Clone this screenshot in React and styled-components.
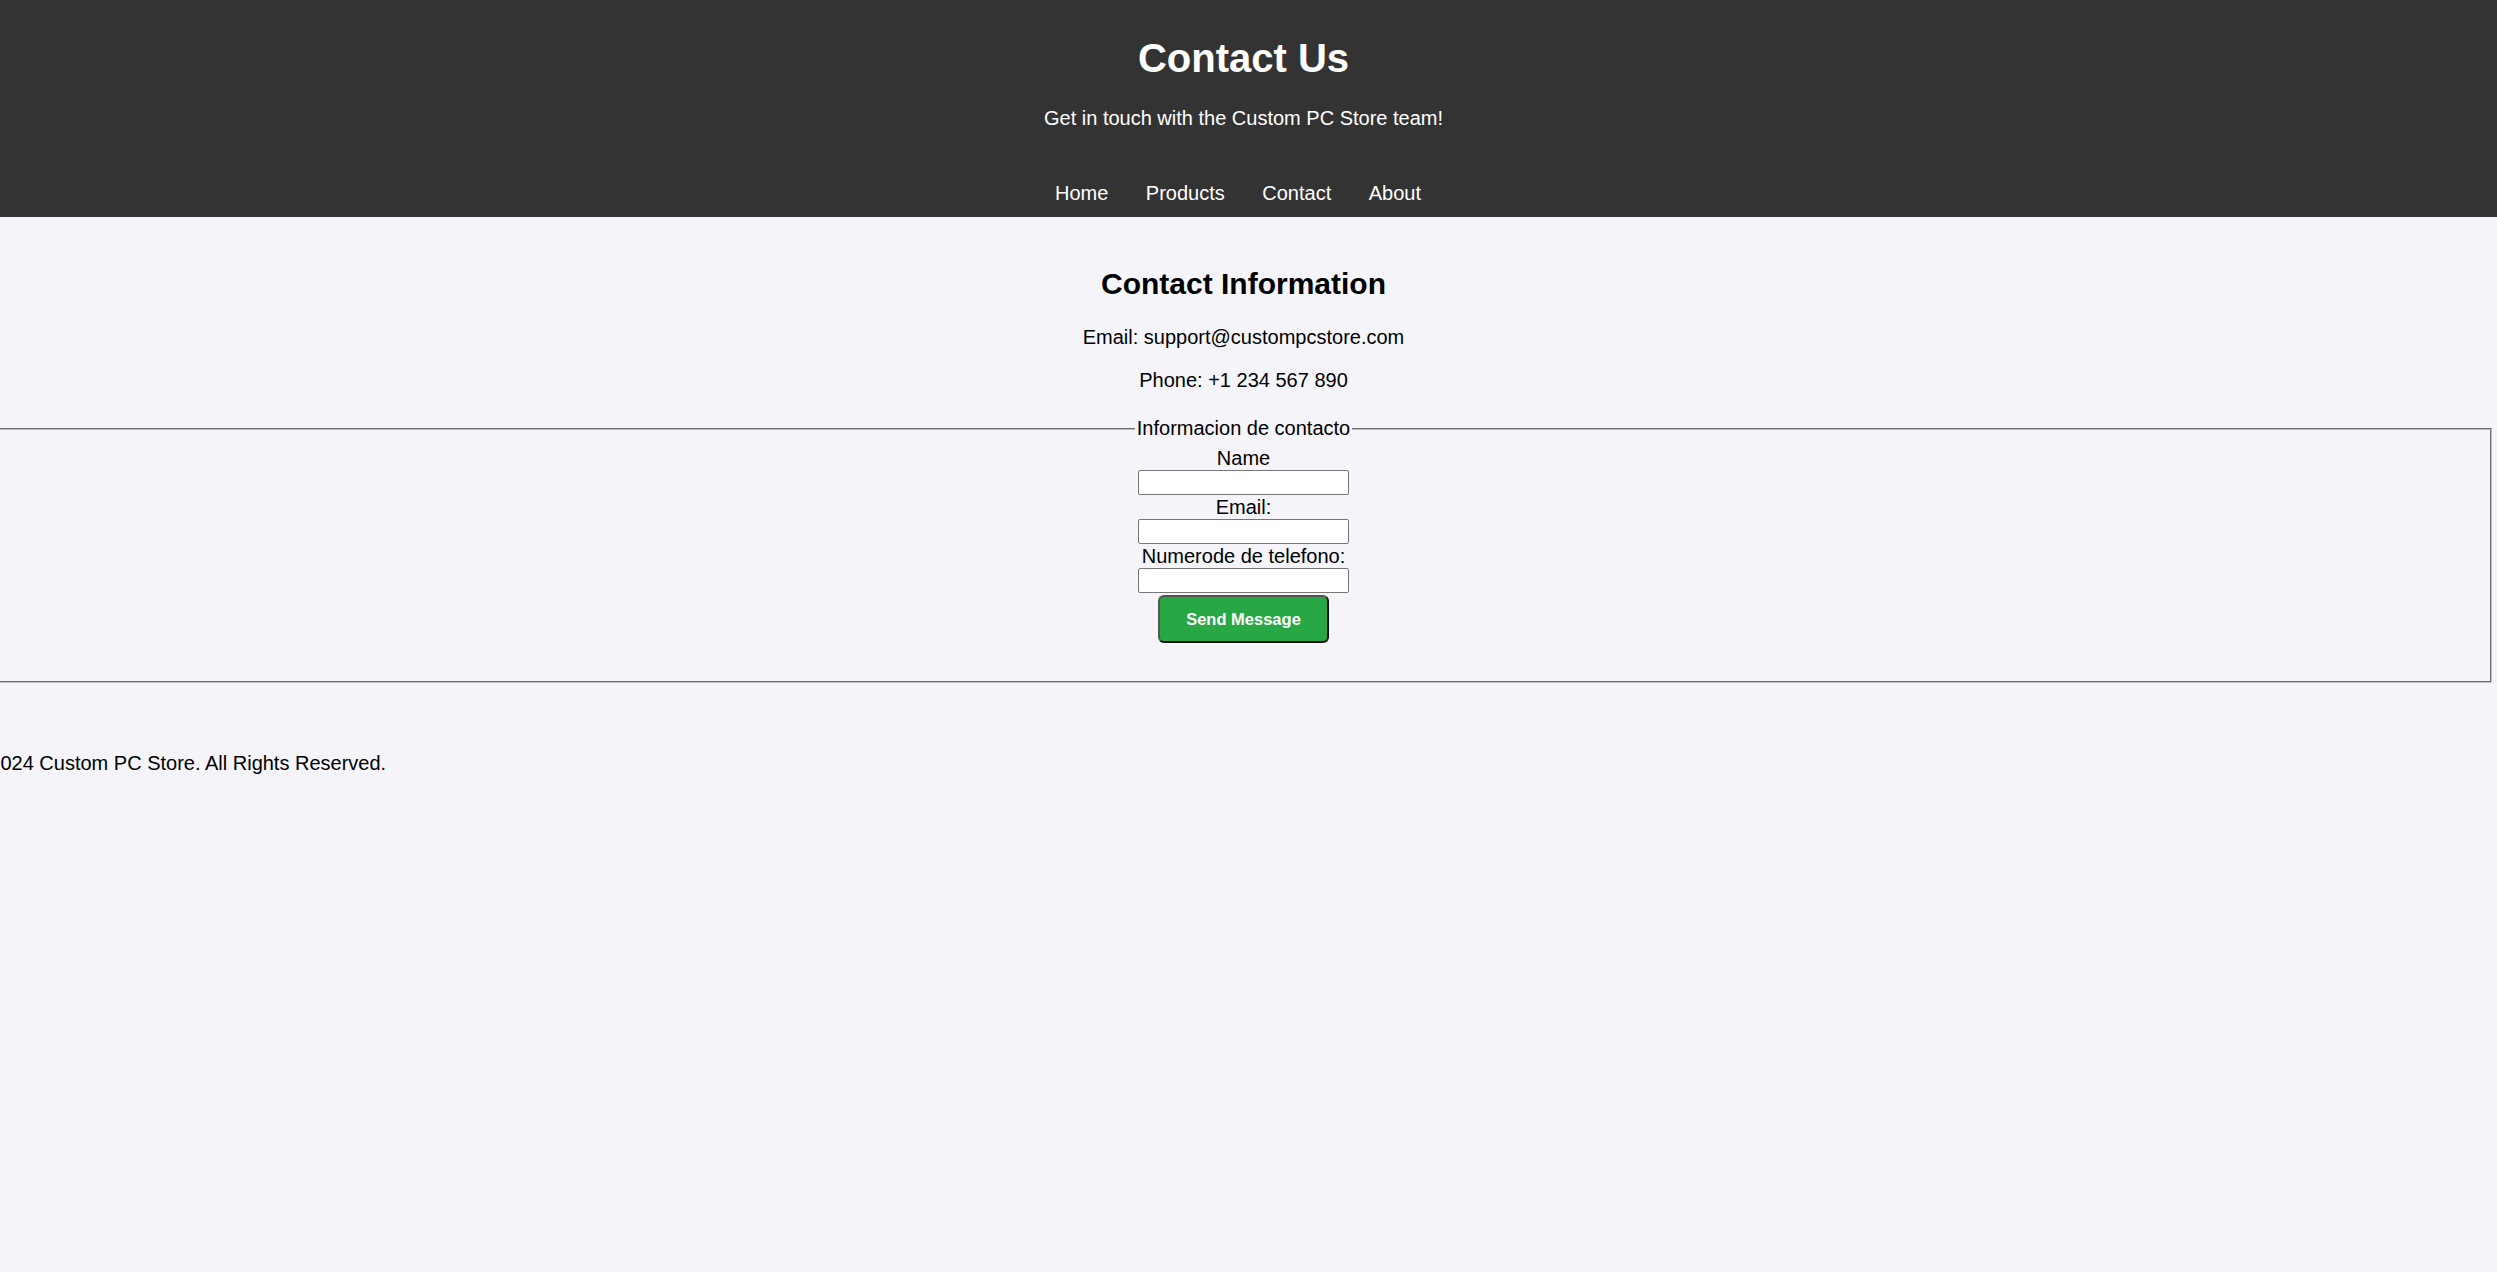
import styled, { createGlobalStyle } from "styled-components";

const GlobalStyle = createGlobalStyle`
  * {
    box-sizing: border-box;
  }
  html,
  body {
    margin: 0;
    padding: 0;
    background: #f4f4f9;
  }
  body {
    min-height: 100vh;
    font-family: "Liberation Sans", Arial, sans-serif;
    font-size: 20px;
    color: #000;
    overflow-x: hidden;
  }
`;

export default function App() {
  return (
    <>
      <GlobalStyle />
      <Header>
        <Title>Contact Us</Title>
        <Subtitle>Get in touch with the Custom PC Store team!</Subtitle>
        <Nav>
          <NavLink href="#">Home</NavLink>
          <NavLink href="#">Products</NavLink>
          <NavLink href="#">Contact</NavLink>
          <NavLink href="#">About</NavLink>
        </Nav>
      </Header>
      <Main>
        <SectionTitle>Contact Information</SectionTitle>
        <InfoLine first>Email: support@custompcstore.com</InfoLine>
        <InfoLine>Phone: +1 234 567 890</InfoLine>
        <Form onSubmit={(e) => e.preventDefault()}>
          <Fieldset>
            <Legend>Informacion de contacto</Legend>
            <Fields>
              <Label htmlFor="name">Name</Label>
              <Input id="name" type="text" />
              <Label htmlFor="email">Email:</Label>
              <Input id="email" type="email" />
              <Label htmlFor="phone">Numerode de telefono:</Label>
              <Input id="phone" type="tel" />
              <SendButton type="submit">Send Message</SendButton>
            </Fields>
          </Fieldset>
        </Form>
      </Main>
      <Footer>© 2024 Custom PC Store. All Rights Reserved.</Footer>
    </>
  );
}

const Header = styled.header`
  background: #333;
  color: #fff;
  text-align: center;
  padding: 35px 10px 12px 0;
`;
const Title = styled.h1`
  margin: 0;
  font-size: 40px;
  line-height: 46px;
  font-weight: 700;
`;
const Subtitle = styled.p`
  margin: 26px 0 0;
  font-size: 20px;
  line-height: 23px;
`;
const Nav = styled.nav`
  display: flex;
  justify-content: center;
  gap: 37.5px;
  margin-top: 52px;
  padding-right: 11px;
  line-height: 23px;
`;
const NavLink = styled.a`
  color: #fff;
  text-decoration: none;
  font-size: 20px;
`;
const Main = styled.main`
  margin: 0 5px 0 -5px;
  text-align: center;
`;
const SectionTitle = styled.h2`
  margin: 50px 0 0;
  font-size: 30px;
  line-height: 34px;
  font-weight: 700;
`;
const InfoLine = styled.p`
  margin: ${(props) => (props.first ? "25px" : "20px")} 0 0;
  line-height: 23px;
`;
const Form = styled.form`
  margin: 25px 0 0;
`;
const Fieldset = styled.fieldset`
  margin: 0;
  padding: 6px 15px 38px;
  border: 2px groove rgb(192, 192, 192);
  min-width: 0;
`;
const Legend = styled.legend`
  margin: 0 auto;
  padding: 0 2px;
  line-height: 23px;
  font-size: 20px;
`;
const Fields = styled.div`
  display: flex;
  flex-direction: column;
  align-items: center;
`;
const Label = styled.label`
  display: block;
  line-height: 24px;
  font-size: 20px;
`;
const Input = styled.input`
  width: 211px;
  height: 25px;
  margin: 0;
  padding: 1px 3px;
  border: 1px solid #767676;
  border-radius: 2px;
  background: #fff;
  font-family: "Liberation Sans", Arial, sans-serif;
  font-size: 16px;
`;
const SendButton = styled.button`
  margin-top: 2px;
  height: 48px;
  padding: 0 26px;
  background: #28a745;
  color: #fff;
  font-family: "Liberation Sans", Arial, sans-serif;
  font-size: 16.5px;
  font-weight: 700;
  border: 2px solid;
  border-color: #555 #111 #111 #555;
  border-radius: 6px;
  cursor: pointer;
`;
const Footer = styled.footer`
  margin: 69px 0 0 -31px;
  line-height: 23px;
  font-size: 20px;
`;
